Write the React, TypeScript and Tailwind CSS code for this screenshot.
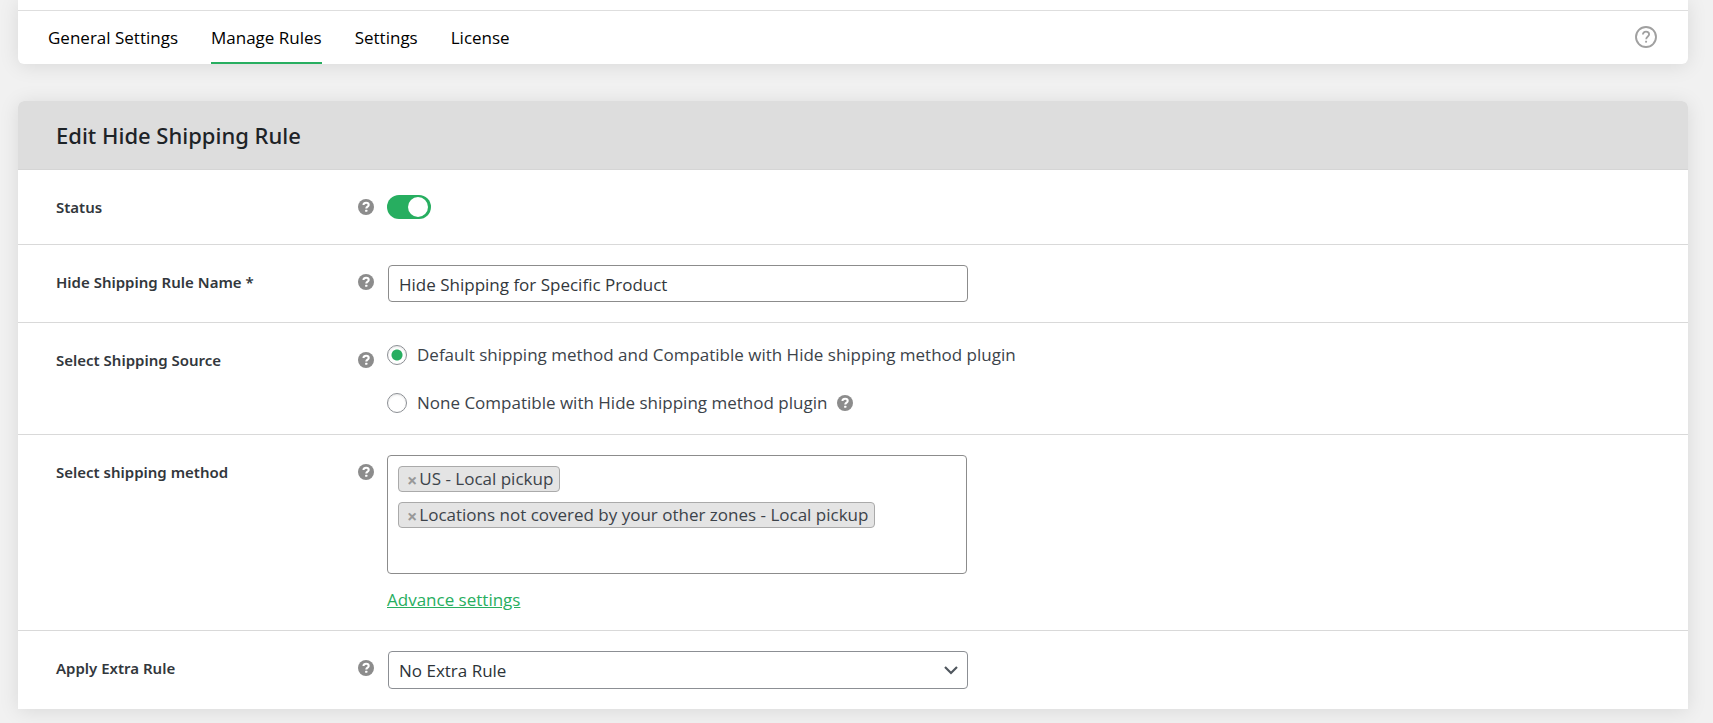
import { useState } from 'react';
import type { ReactNode } from 'react';

const TABS = ['General Settings', 'Manage Rules', 'Settings', 'License'];

const SOURCES = [
  { id: 'default', label: 'Default shipping method and Compatible with Hide shipping method plugin', help: false },
  { id: 'none', label: 'None Compatible with Hide shipping method plugin', help: true },
];

function HelpIcon() {
  return (
    <button type="button" aria-label="Help" className="block h-4 w-4 shrink-0">
      <svg viewBox="0 0 16 16" className="h-4 w-4">
        <circle cx="8" cy="8" r="8" fill="#8c8c8c" />
        <path
          d="M5.5 6.1C5.5 4.5 6.5 3.8 8.1 3.8s2.6.8 2.6 2.1c0 1.7-2.4 1.8-2.4 3.6"
          fill="none"
          stroke="#fff"
          strokeWidth="2.1"
        />
        <rect x="7.1" y="10.7" width="2.3" height="2.1" rx="0.5" fill="#fff" />
      </svg>
    </button>
  );
}

interface FormRowProps {
  label: string;
  htmlFor?: string;
  children: ReactNode;
}

function FormRow({ label, htmlFor, children }: FormRowProps) {
  return (
    <div className="flex border-b border-[#d9d9d9] pl-[38px] last:border-b-0">
      <div className="flex w-[331px] shrink-0 items-start justify-between pr-[13px] pt-[26px]">
        <label
          htmlFor={htmlFor}
          className="font-['Noto_Sans',sans-serif] text-[15px] leading-[22px] font-semibold text-[#32373c]"
        >
          {label}
        </label>
        <div className="pt-[3px]">
          <HelpIcon />
        </div>
      </div>
      <div className="min-w-0 flex-1 py-5">{children}</div>
    </div>
  );
}

export default function App() {
  const [activeTab, setActiveTab] = useState('Manage Rules');
  const [enabled, setEnabled] = useState(true);
  const [name, setName] = useState('Hide Shipping for Specific Product');
  const [source, setSource] = useState('default');
  const [methods, setMethods] = useState([
    'US - Local pickup',
    'Locations not covered by your other zones - Local pickup',
  ]);

  return (
    <div className="min-h-screen bg-[#f1f1f1] pr-[25px] pb-3.5 pl-[18px] font-['Open_Sans','Noto_Sans',sans-serif] text-[#3c434a]">
      {/* Top navigation */}
      <header className="rounded-b-md bg-white pt-2.5 shadow-[0_2px_20px_rgba(0,0,0,0.1)]">
        <div className="flex items-start justify-between border-t border-[#dedede] pr-[31px] pl-[30px]">
          <nav className="flex gap-[33px]">
            {TABS.map((tab) => (
              <a
                key={tab}
                href="#"
                onClick={() => setActiveTab(tab)}
                className={`border-b-2 pt-[15px] pb-3 text-[17px] leading-6 text-black ${
                  activeTab === tab ? 'border-[#27ae60]' : 'border-transparent'
                }`}
              >
                {tab}
              </a>
            ))}
          </nav>
          <button type="button" aria-label="Documentation" className="mt-[15px]">
            <svg viewBox="0 0 22 22" className="h-[22px] w-[22px]" fill="none" stroke="#a0a0a0">
              <circle cx="11" cy="11" r="10" strokeWidth="1.9" />
              <path d="M7.9 8.6c0-1.7 1.3-2.9 3.1-2.9s3.1 1.1 3.1 2.7c0 2-2.9 2.2-2.9 4.8" strokeWidth="1.8" />
              <path d="M11.1 14.8v1.8" strokeWidth="1.9" />
            </svg>
          </button>
        </div>
      </header>

      {/* Rule form */}
      <main className="mt-[37px] rounded-t-md bg-white shadow-[0_2px_20px_rgba(0,0,0,0.1)]">
        <div className="rounded-t-md border-b border-[#d5d5d5] bg-[#ddd] px-[38px] py-5">
          <h2 className="font-['Noto_Sans',sans-serif] text-[22px] leading-7 font-medium text-[#1d2327]">
            Edit Hide Shipping Rule
          </h2>
        </div>

        <form onSubmit={(e) => e.preventDefault()}>
          <FormRow label="Status" htmlFor="status">
            <div className="flex h-[34px] items-center">
              <label
                className={`flex h-6 w-11 cursor-pointer items-center rounded-full px-[3px] ${
                  enabled ? 'justify-end bg-[#27ae60]' : 'justify-start bg-gray-300'
                }`}
              >
                <input
                  id="status"
                  type="checkbox"
                  checked={enabled}
                  onChange={(e) => setEnabled(e.target.checked)}
                  className="sr-only"
                />
                <span className="h-5 w-5 rounded-full bg-white" />
              </label>
            </div>
          </FormRow>

          <FormRow label="Hide Shipping Rule Name *" htmlFor="rule-name">
            <input
              id="rule-name"
              type="text"
              value={name}
              onChange={(e) => setName(e.target.value)}
              className="mx-px block h-[37px] w-full max-w-[580px] rounded border border-[#8c8c8c] bg-white px-2.5 pt-0.5 text-[17px] text-[#32373c]"
            />
          </FormRow>

          <FormRow label="Select Shipping Source">
            <div className="flex h-[71px] flex-col gap-6">
              {SOURCES.map((item) => (
                <div key={item.id} className="flex items-center gap-2.5">
                  <label className="flex items-center gap-2.5 text-[17px] leading-6">
                    <input
                      type="radio"
                      name="source"
                      checked={source === item.id}
                      onChange={() => setSource(item.id)}
                      className="h-5 w-5 shrink-0 appearance-none rounded-full border border-[#8c8f94] bg-white shadow-[inset_0_1px_2px_rgba(0,0,0,0.1)] checked:bg-[radial-gradient(circle,#27ae60_5px,transparent_6px)]"
                    />
                    {item.label}
                  </label>
                  {item.help && <HelpIcon />}
                </div>
              ))}
            </div>
          </FormRow>

          <FormRow label="Select shipping method">
            <ul className="flex h-[119px] w-full max-w-[580px] flex-col items-start gap-2.5 rounded border border-[#8c8c8c] bg-white p-2.5">
              {methods.map((method) => (
                <li
                  key={method}
                  className="flex h-[26px] items-center gap-0.5 rounded border border-[#aaa] bg-[#e4e4e4] pr-1.5 pl-2 text-[17px] leading-6"
                >
                  <button
                    type="button"
                    aria-label={`Remove ${method}`}
                    onClick={() => setMethods(methods.filter((m) => m !== method))}
                    className="pt-0.5 text-lg leading-6 font-bold text-[#999]"
                  >
                    ×
                  </button>
                  {method}
                </li>
              ))}
            </ul>
            <a href="#" className="mt-4 block w-fit text-[17px] leading-5 text-[#27ae60] underline">
              Advance settings
            </a>
          </FormRow>

          <FormRow label="Apply Extra Rule" htmlFor="extra-rule">
            <div className="mx-px grid w-full max-w-[580px] items-center">
              <select
                id="extra-rule"
                className="col-start-1 row-start-1 h-[38px] w-full appearance-none rounded border border-[#8c8f94] bg-white pt-0.5 pr-8 pl-2.5 text-[17px] text-[#2c3338]"
              >
                <option>No Extra Rule</option>
              </select>
              <svg
                viewBox="0 0 14 9"
                className="pointer-events-none col-start-1 row-start-1 mr-2.5 h-[9px] w-3.5 justify-self-end"
                fill="none"
                stroke="#50575e"
                strokeWidth="2.2"
              >
                <path d="M1 1l6 6 6-6" />
              </svg>
            </div>
          </FormRow>
        </form>
      </main>
    </div>
  );
}
